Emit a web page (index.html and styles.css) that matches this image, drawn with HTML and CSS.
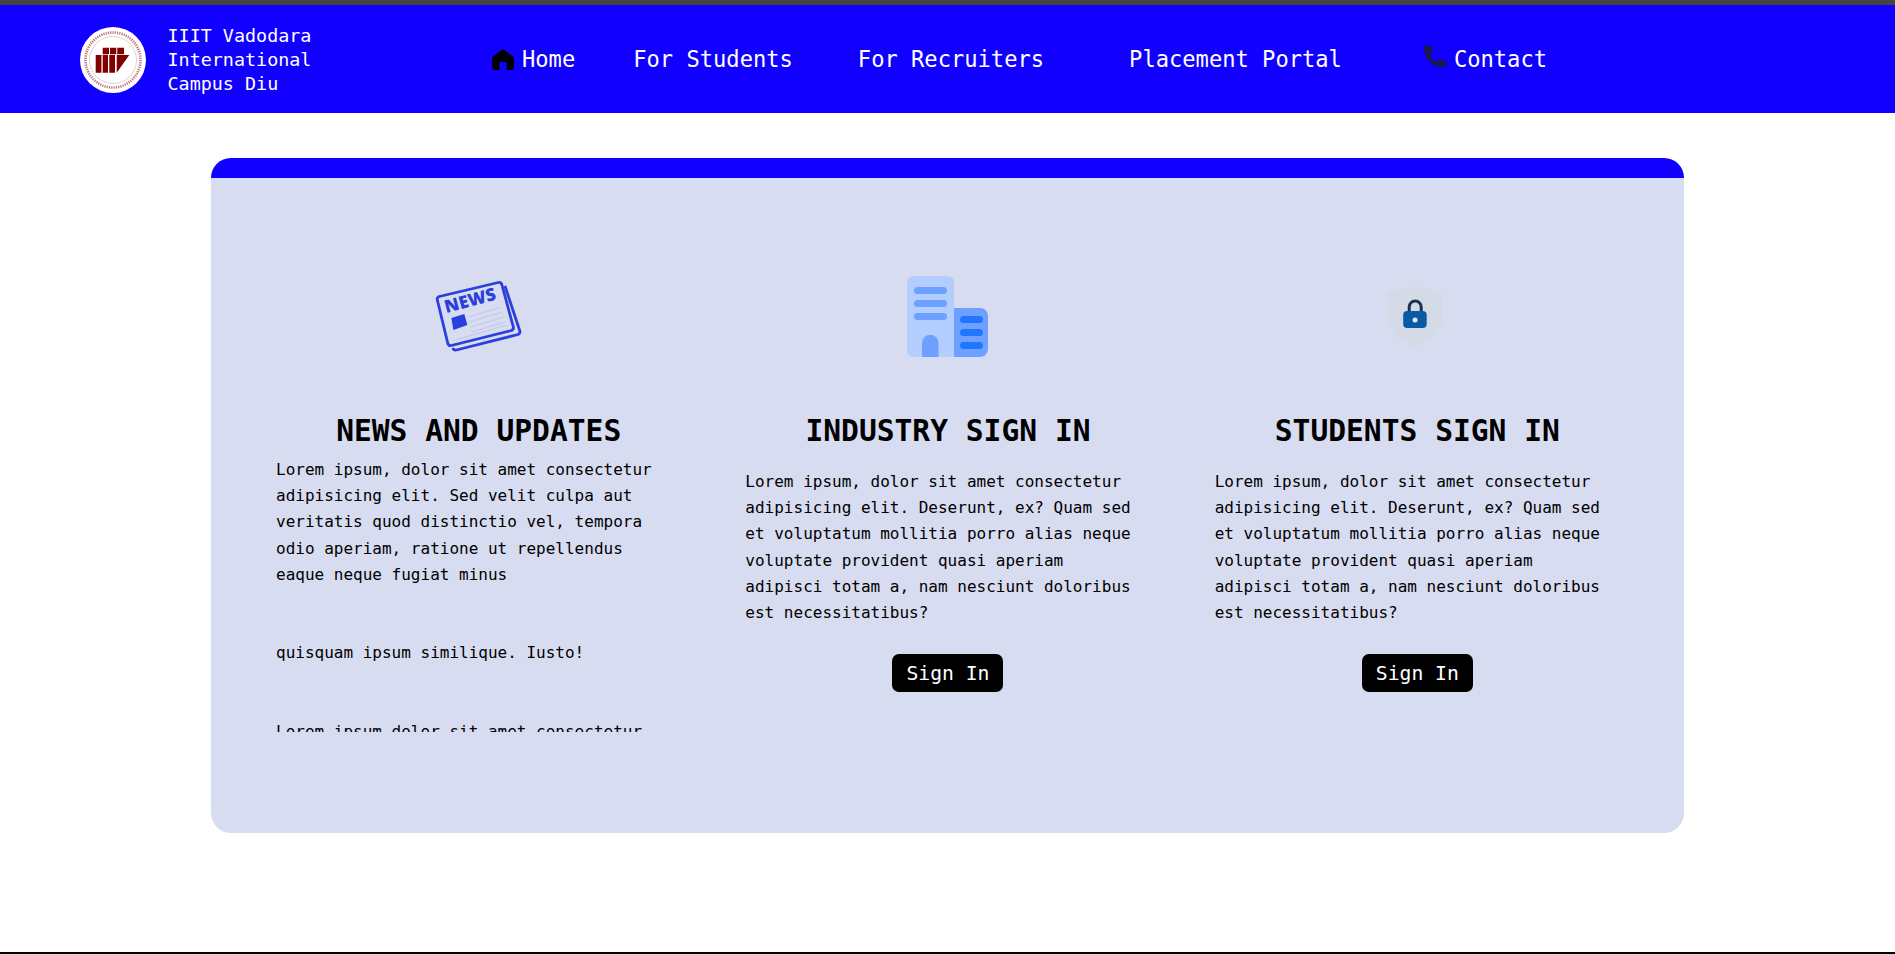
FILE: index.html
```html
<!DOCTYPE html>
<html lang="en">
<head>
<meta charset="utf-8">
<title>IIIT Vadodara International Campus Diu</title>
<link rel="stylesheet" href="styles.css">
</head>
<body>
<header class="site-header">
  <a class="brand" href="#">
    <svg class="logo" viewBox="0 0 66 66" aria-hidden="true">
      <circle cx="33" cy="33" r="33" fill="#fff"/>
      <circle cx="33" cy="33" r="27.500" fill="none" stroke="#a5313c" stroke-width="2.600" stroke-dasharray="1.200 1.100" opacity=".7"/>
      <circle cx="33" cy="33" r="23.500" fill="none" stroke="#cfc9c9" stroke-width=".8"/>
      <path fill="#800000" d="M22.700 20.700h6.300v6.600h-6.300zM30 20.700h6.300v6.600H30zM37.300 20.700H44v6.600h-6.700zM15.700 28h5.700v17.700h-5.700zM22.700 28H28v17.700h-5.300zM29.300 28H35v17.700h-5.700zM36.700 28h12.600L36.700 45.700z"/>
    </svg>
    <span class="brand-name">IIIT Vadodara<br>International<br>Campus Diu</span>
  </a>
  <nav class="nav">
    <a class="nav-link" href="#">
      <svg class="nav-icon" viewBox="0 0 22 21" aria-hidden="true"><path fill="#000" d="M11 0 21 7.500a2 2 0 0 1 1 2V18a3 3 0 0 1-3 3h-4.500v-8h-7v8H3a3 3 0 0 1-3-3V9.500a2 2 0 0 1 1-2Z"/></svg>
      Home</a>
    <a class="nav-link nav-students" href="#">For Students</a>
    <a class="nav-link nav-recruiters" href="#">For Recruiters</a>
    <a class="nav-link nav-portal" href="#">Placement Portal</a>
    <a class="nav-link nav-contact" href="#">
      <svg class="nav-icon nav-phone" viewBox="3 3 18 18" aria-hidden="true"><path fill="#1a1a4a" stroke="#1a1a4a" stroke-width="1.200" stroke-linejoin="round" d="M6.620 10.790c1.440 2.830 3.760 5.140 6.590 6.590l2.200-2.200c.27-.27.67-.36 1.020-.24 1.120.37 2.330.57 3.570.57.55 0 1 .45 1 1V20c0 .55-.45 1-1 1-9.390 0-17-7.610-17-17 0-.55.45-1 1-1h3.500c.55 0 1 .45 1 1 0 1.250.2 2.450.57 3.570.11.35.03.74-.25 1.020l-2.200 2.200z"/></svg>
      Contact</a>
  </nav>
</header>

<main class="main">
  <section class="card">
    <div class="card-bar"></div>
    <div class="card-grid">
      <article class="col">
        <div class="col-icon">
          <svg class="icon-news" viewBox="3.670 1 110 100" aria-hidden="true">
            <path d="M85 22 99.500 66a3 3 0 0 1-2 3.500L36 85a3 3 0 0 1-3-1" fill="none" stroke="#2a3fdc" stroke-width="2.800" stroke-linecap="round" stroke-linejoin="round"/>
            <path d="M19 31.500 78 17.500a3 3 0 0 1 3.500 2L93 62a3 3 0 0 1-2 3.500L31 80.500a3 3 0 0 1-3.500-2L17 35a3 3 0 0 1 2-3.500Z" fill="#d8dcf0" stroke="#2a3fdc" stroke-width="2.800" stroke-linejoin="round"/>
            <g stroke="#c3c9e8" stroke-width="1.300">
              <path d="M48 52 81 42M49 57 82 47M50 62 84 52M51 67 85 57M35 75 87 60"/>
            </g>
            <path fill="#2a3fdc" d="M31 53 44 49 47 60 33 65Z"/>
            <text class="news-word" x="26" y="48" transform="rotate(-15 26 48)">NEWS</text>
          </svg>
        </div>
        <h2 class="col-title">NEWS AND UPDATES</h2>
        <div class="news-scroll">
          <p class="col-text news-text">Lorem ipsum, dolor sit amet consectetur adipisicing elit. Sed velit culpa aut veritatis quod distinctio vel, tempora odio aperiam, ratione ut repellendus eaque neque fugiat minus<br><br><br>quisquam ipsum similique. Iusto!<br><br><br>Lorem ipsum dolor sit amet consectetur adipisicing elit.</p>
        </div>
      </article>
      <article class="col">
        <div class="col-icon">
          <svg class="icon-building" viewBox="3 1 110 100" aria-hidden="true">
            <path fill="#6ea1ff" d="M60 43h30a8 8 0 0 1 8 8v33a8 8 0 0 1-8 8H60z"/>
            <path fill="#b4cdff" d="M23 11h35a6 6 0 0 1 6 6v75H23a6 6 0 0 1-6-6V17a6 6 0 0 1 6-6Z"/>
            <g fill="#6ea1ff">
              <rect x="24" y="22" width="33" height="7" rx="3.500"/>
              <rect x="24" y="35" width="33" height="7" rx="3.500"/>
              <rect x="24" y="48" width="33" height="7" rx="3.500"/>
              <path d="M32 92V78a8 8 0 0 1 16.500 0v14Z"/>
            </g>
            <g fill="#2176ff">
              <rect x="70" y="51" width="23" height="7" rx="3.500"/>
              <rect x="70" y="64" width="23" height="7" rx="3.500"/>
              <rect x="70" y="77" width="23" height="7" rx="3.500"/>
            </g>
          </svg>
        </div>
        <h2 class="col-title">INDUSTRY SIGN IN</h2>
        <p class="col-text signin-text">Lorem ipsum, dolor sit amet consectetur adipisicing elit. Deserunt, ex? Quam sed et voluptatum mollitia porro alias neque voluptate provident quasi aperiam adipisci totam a, nam nesciunt doloribus est necessitatibus?</p>
        <a class="btn" href="#">Sign In</a>
      </article>
      <article class="col">
        <div class="col-icon">
          <svg class="icon-lock" viewBox="2.300 1 90 80" aria-hidden="true">
            <path fill="#d5dbe6" d="M45 11 73 17V44Q71 61 45 72 20 61 18 44V17Z"/>
            <path d="M39.500 38V32a6 6 0 0 1 12 0v6" fill="none" stroke="#1e2f4f" stroke-width="3"/>
            <rect x="33.500" y="36" width="23.500" height="17" rx="4" fill="#0b5aa8"/>
            <circle cx="45.300" cy="45" r="2.500" fill="#e4e9f2"/>
          </svg>
        </div>
        <h2 class="col-title">STUDENTS SIGN IN</h2>
        <p class="col-text signin-text">Lorem ipsum, dolor sit amet consectetur adipisicing elit. Deserunt, ex? Quam sed et voluptatum mollitia porro alias neque voluptate provident quasi aperiam adipisci totam a, nam nesciunt doloribus est necessitatibus?</p>
        <a class="btn" href="#">Sign In</a>
      </article>
    </div>
  </section>
</main>
<footer class="site-footer"></footer>
</body>
</html>
```
FILE: styles.css
```css
* { box-sizing: border-box; }
html, body { margin: 0; height: 100%; }
body {
  display: flex;
  flex-direction: column;
  height: 954px;
  overflow: hidden;
  background: #fff;
  color: #000;
  font-family: "DejaVu Sans Mono", "Liberation Mono", monospace;
}
a { color: inherit; text-decoration: none; }

.site-header {
  display: flex;
  align-items: center;
  flex: none;
  height: 113px;
  padding: 1px 0 0 80px;
  border-top: 5px solid #444;
  background: #1100ff;
  color: #fff;
}
.brand { display: flex; align-items: center; gap: 21.500px; width: 412px; }
.logo { width: 66px; height: 66px; flex: none; }
.brand-name { font-size: 18.400px; line-height: 24px; }

.nav { display: flex; align-items: center; margin-top: -1px; font-size: 22.100px; }
.nav-link { display: flex; align-items: center; gap: 8px; white-space: nowrap; }
.nav-icon { width: 22px; height: 21px; flex: none; }
.nav-phone { margin-top: -5px; }
.nav-students { margin-left: 58px; }
.nav-recruiters { margin-left: 65px; }
.nav-portal { margin-left: 85px; }
.nav-contact { margin-left: 82px; }

.main { flex: 1; min-height: 0; }
.card {
  width: 1473px;
  height: 675px;
  margin: 45px 0 0 211px;
  border-radius: 20px;
  overflow: hidden;
  background: #d8dcf0;
}
.card-bar { height: 20px; background: #1100ff; }
.card-grid {
  display: grid;
  grid-template-columns: repeat(3, 1fr);
  gap: 64px;
  padding: 88px 64px 0 65px;
}
.col { display: flex; flex-direction: column; align-items: center; min-width: 0; }
.col-icon { display: flex; align-items: center; justify-content: center; height: 100px; }
.icon-news, .icon-building { width: 110px; height: 100px; }
.icon-lock { width: 90px; height: 80px; }
.news-word { font: 800 17.500px "Open Sans", "Liberation Sans", sans-serif; fill: #2a3fdc; }
.col-title {
  margin: 46px 0 0;
  font-size: 29.600px;
  line-height: 38px;
  font-weight: 700;
  text-align: center;
  white-space: nowrap;
}
.col-text { width: 395px; margin: 0; font-size: 16px; line-height: 26.200px; }
.news-scroll { width: 100%; height: 275px; margin-top: 7px; overflow: hidden; }
.signin-text { margin-top: 19px; align-self: flex-start; }
.btn {
  display: flex;
  align-items: center;
  justify-content: center;
  width: 111px;
  height: 38px;
  margin-top: 28px;
  border-radius: 7px;
  background: #000;
  color: #fff;
  font-size: 19.700px;
}
.site-footer { flex: none; height: 2px; background: #000; }
```
